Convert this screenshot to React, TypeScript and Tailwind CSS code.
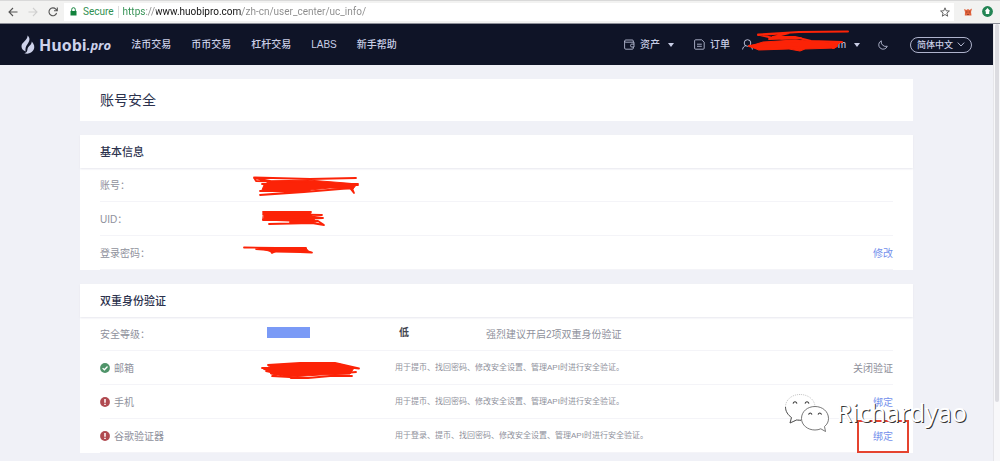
import type { ReactNode } from "react";

const MENU = ["法币交易", "币币交易", "杠杆交易", "LABS", "新手帮助"];

function Flame() {
  return (
    <svg viewBox="0 0 14 20" className="h-5 w-3.5" fill="currentColor" aria-hidden="true">
      <path d="M6.6 0.6C9.4 3.4 8.8 6 6.400 9.2C4.600 11.600 4.200 14 4.600 16.400C2 15.500 0.500 13.900 0.500 11.300C0.500 7.200 6.600 5.800 6.600 0.600Z" />
      <path d="M10.800 6.400C13.400 9.400 14 12.200 12.600 14.800C11.400 17 9 18.600 6.200 18.700C5 18.700 4.100 18.500 3.400 18.200C7.200 17.200 5.800 14.400 7.200 12.200C8.400 10.400 10.600 9.600 10.800 6.400Z" />
    </svg>
  );
}

function Caret() {
  return (
    <svg viewBox="0 0 6 4" className="h-1 w-1.5" fill="currentColor" aria-hidden="true">
      <path d="M0 0H6L3 4Z" />
    </svg>
  );
}

function WalletIcon() {
  return (
    <svg viewBox="0 0 11 11" className="size-[11px]" fill="none" stroke="currentColor" strokeWidth="0.8" aria-hidden="true">
      <path d="M9.3 3.2V2A1 1 0 0 0 8.3 1H1.8A1.2 1.2 0 0 0 .6 2.2V9A1.2 1.2 0 0 0 1.8 10.200H8.3A1 1 0 0 0 9.300 9.200V8M.6 2.2C.6 3 1.200 3.200 1.800 3.200H10V8H7.800A1.200 1.200 0 0 1 6.600 6.800V6.300A1.200 1.200 0 0 1 7.800 5.100H10" />
    </svg>
  );
}

function OrderIcon() {
  return (
    <svg viewBox="0 0 11 11" className="size-[11px]" fill="none" stroke="currentColor" strokeWidth="0.8" aria-hidden="true">
      <path d="M1.600 .8H7.600L10.200 3.200V9.200A1 1 0 0 1 9.200 10.200H1.600A1 1 0 0 1 .6 9.200V1.800A1 1 0 0 1 1.600 .8ZM3 5.200H7.800M3 7.300H7.800" />
    </svg>
  );
}

function UserIcon() {
  return (
    <svg viewBox="0 0 11 11" className="size-[11px]" fill="none" stroke="currentColor" strokeWidth="0.9" aria-hidden="true">
      <circle cx="5.500" cy="4" r="3.300" />
      <path d="M.6 10.500C.8 8.400 1.900 7.400 3.500 6.800M10.400 10.500C10.200 8.400 9.100 7.400 7.500 6.800" />
    </svg>
  );
}

function MoonIcon() {
  return (
    <svg viewBox="0 0 10 10" className="size-2.5" fill="none" stroke="currentColor" strokeWidth="0.8" aria-hidden="true">
      <path d="M3.300 .8A4.400 4.400 0 1 0 9.300 6.200A4.600 4.600 0 0 1 3.300 .8Z" />
    </svg>
  );
}

function StatusIcon({ ok }: { ok: boolean }) {
  return (
    <svg viewBox="0 0 10 10" className="size-2.5 shrink-0" aria-hidden="true">
      <circle cx="5" cy="5" r="4.900" fill={ok ? "#4f9469" : "#b04a50"} />
      {ok ? (
        <path d="M2.600 5.100L4.400 6.800L7.500 3.500" fill="none" stroke="#fff" strokeWidth="1.300" />
      ) : (
        <path d="M5 2V5.800M5 6.800V8" fill="none" stroke="#fff" strokeWidth="1.500" />
      )}
    </svg>
  );
}

function Scribble({ box, className, lines, fill }: { box: string; className: string; lines: string; fill: string }) {
  return (
    <svg viewBox={box} className={className} fill="none" stroke="#fc2307" strokeLinecap="round" strokeLinejoin="round" aria-hidden="true">
      <path d={fill} fill="#fc2307" strokeWidth="1" />
      <path d={lines} strokeWidth="1.800" />
    </svg>
  );
}

function AccountScribble() {
  return (
    <Scribble
      box="240 169 124 32"
      className="h-8 w-[124px]"
      fill="M270 181L308 180L346 183L357 184L353 189L330 188L300 191L262 190L264 185Z"
      lines="M356 178L310 179L254 177.500L256 181L310 182M254 178L270 181M262 184L358 184M260 191L310 191L260 195L304 192L352 188L354 193L350 188M352 185L358 185"
    />
  );
}

function UidScribble() {
  return (
    <Scribble
      box="240 203 124 32"
      className="h-8 w-[124px]"
      fill="M264 212L310 212L312 216L316 222L290 221L263 220Z"
      lines="M263 212L311 212M263 220L268 216L263 214L322 215L300 218L323 218L280 220L263 220M269 224L312 223L324 225L318 221L290 222"
    />
  );
}

function PasswordScribble() {
  return (
    <Scribble
      box="240 237 124 32"
      className="h-8 w-[124px]"
      fill="M256 247.500L306 248L309 252L272 252L262 249Z"
      lines="M244 247.500L276 248L306 248M256 249L270 250L272 253L276 251L312 252.500L304 250"
    />
  );
}

function MailScribble() {
  return (
    <Scribble
      box="240 352 124 32"
      className="h-8 w-[124px]"
      fill="M269 365L300 363.500L338 363.500L354 368L350 374L320 375L290 377L271 374Z"
      lines="M268 365L300 363L335 363L359 368.500L346 367M262 368L274 368M264 369L275 371L266 371L280 374L272 376L290 377L291 378L308 378L330 376L352 376M345 373L356 372"
    />
  );
}

function NameScribble() {
  return (
    <svg viewBox="748 28 104 26" className="absolute -top-2 left-[5px] h-[26px] w-[104px]" fill="none" stroke="#fc2307" strokeLinecap="round" strokeLinejoin="round" aria-hidden="true">
      <path d="M751 45L764 41L796 39L840 42L836 47L806 48L801 50L790 48L760 49Z" fill="#fc2307" />
      <path d="M849 30.500L800 31L759 33.500L774 37L800 40L780 41L750 45L762 48L800 46M759 34L790 32L774 36L796 36L812 40L843 41L830 43L838 45L834 47M770 38L802 37" strokeWidth="2" />
    </svg>
  );
}

function WechatIcon() {
  return (
    <svg viewBox="0 0 46 40" className="h-10 w-[46px]" aria-hidden="true">
      <path d="M16 1.500C7.500 1.500 1.500 7 1.500 14C1.500 18.500 4 22 7.500 24.500L6 30L12.500 27C22 28.500 31 23 31 14C31 7 24.500 1.500 16 1.500Z" fill="#fff" stroke="#aaa" strokeWidth="0.700" strokeDasharray="1 1" />
      <path d="M1.500 14C1.500 18.500 4 22 7.500 24.500L6 30L12.500 27L17 27.300" fill="none" stroke="#444" strokeWidth="0.900" />
      <path d="M31 13.500C23.500 13.500 17.500 18.500 17.500 25.500C17.500 32 23.500 37 31 37C33.200 37 35 36.600 36.800 35.800L41.500 38.500L40.500 33.500C43.200 31.500 44.500 28.700 44.500 25.500C44.500 18.500 38.500 13.500 31 13.500Z" fill="#fff" stroke="#555" strokeWidth="0.800" />
      <path d="M9 10.500Q11 7 13 10.500M21 10.500Q23 7 25 10.500M24.500 21.500Q26.200 18.500 28 21.500M34 21.500Q35.800 18.500 37.600 21.500" fill="none" stroke="#333" strokeWidth="1.200" />
    </svg>
  );
}

function BrowserBar() {
  return (
    <header className="flex h-6 items-center border-t border-b border-t-[#d9d9d9] border-b-[#8d8f98] bg-[#f2f2f1] pb-px text-[#5f6368]">
      <div className="flex w-16 shrink-0 items-center gap-2.5 pl-2">
        <button aria-label="Back">
          <svg viewBox="0 0 10 10" className="size-2.5" fill="none" stroke="#555" strokeWidth="1.100"><path d="M9.500 5H1M5 1L1 5L5 9" /></svg>
        </button>
        <button aria-label="Forward">
          <svg viewBox="0 0 10 10" className="size-2.5" fill="none" stroke="#d0d0d0" strokeWidth="1.100"><path d="M.5 5H9M5 1L9 5L5 9" /></svg>
        </button>
        <button aria-label="Reload">
          <svg viewBox="0 0 10 10" className="size-2.5" fill="none" stroke="#555" strokeWidth="1.100"><path d="M8.600 6A3.900 3.900 0 1 1 7.800 2.200L9 3.400M9.300 .5V3.800H6" /></svg>
        </button>
      </div>
      <div className="flex h-[18px] flex-1 items-center bg-white pr-1 pl-1.5">
        <svg viewBox="0 0 7 9" className="h-[9px] w-[7px]" aria-hidden="true">
          <path d="M.5 4H6.500V8.500H.5Z" fill="#12833c" />
          <path d="M1.700 4V2.500A1.800 1.800 0 0 1 5.300 2.500V4" fill="none" stroke="#12833c" />
        </svg>
        <span className="ml-1.5 border-r border-[#ddd] pr-1 font-[Roboto,sans-serif] text-[10px] leading-3 text-[#2f8f50]">Secure</span>
        <input
          aria-label="Address"
          defaultValue="https://www.huobipro.com/zh-cn/user_center/uc_info/"
          className="ml-1 h-3 min-w-0 flex-1 bg-[linear-gradient(90deg,#2f8f50_23px,#8a8a8a_23px,#8a8a8a_33px,#111_33px,#111_119px,#8a8a8a_119px)] bg-clip-text font-[Roboto,sans-serif] text-[10px] leading-3 text-transparent outline-none"
        />
        <button aria-label="Bookmark">
          <svg viewBox="0 0 10 10" className="size-2.5" fill="none" stroke="#555" strokeWidth="0.900"><path d="M5 .8L6.200 3.800L9.400 4L6.900 6L7.700 9.200L5 7.500L2.300 9.200L3.100 6L.6 4L3.800 3.800Z" /></svg>
        </button>
      </div>
      <div className="flex w-[46px] shrink-0 items-center justify-between pr-[7px] pl-2.5">
        <svg viewBox="0 0 8 8" className="size-2" aria-hidden="true">
          <path d="M0 1L2.500 2L4 1L5.500 2L8 .5L7 4L7.500 7.500H.8L1 4Z" fill="#e0623c" />
          <path d="M2 4H3.500M4.800 4H6.200M3 6.500H5" stroke="#8b3a25" strokeWidth="0.800" />
        </svg>
        <svg viewBox="0 0 11 11" className="size-[11px]" aria-hidden="true">
          <circle cx="5.500" cy="5.500" r="5.400" fill="#238454" />
          <path d="M5.500 2L8.300 5.300H7.200V8H3.800V5.300H2.700Z" fill="#fff" />
        </svg>
      </div>
    </header>
  );
}

function NavBar() {
  return (
    <nav className="flex h-[41px] items-center bg-[#0f1427] pr-[21px] pl-[21px] text-[10px] font-medium text-[#c9cee6]">
      <a href="#home" className="flex items-center text-[#cdd2ea]">
        <Flame />
        <span className="ml-1 font-['Open_Sans',sans-serif] text-[16px] leading-5 font-bold">Huobi</span>
        <span className="font-['Open_Sans',sans-serif] text-[13px] leading-5 font-bold italic">.pro</span>
      </a>
      <div className="ml-5 flex flex-1 items-center gap-5">
        {MENU.map((item) => (
          <a key={item} href="#menu" className="whitespace-nowrap">{item}</a>
        ))}
      </div>
      <div className="flex items-center">
        <button className="flex items-center">
          <WalletIcon />
          <span className="mr-2 ml-[5px]">资产</span>
          <Caret />
        </button>
        <a href="#orders" className="ml-5 flex items-center gap-[5px]">
          <OrderIcon />
          订单
        </a>
        <button aria-label="Account" className="relative ml-3 flex w-[118px] items-center justify-between">
          <UserIcon />
          <span className="flex items-center gap-2">m<Caret /></span>
          <NameScribble />
        </button>
        <button aria-label="Night mode" className="mr-[22px] ml-[18px]">
          <MoonIcon />
        </button>
        <button className="flex h-4 items-center gap-1 rounded-full border border-[#aeb3cc] px-1.5 text-[9px] leading-3">
          简体中文
          <svg viewBox="0 0 8 5" className="h-[5px] w-2" fill="none" stroke="currentColor" strokeWidth="0.900" aria-hidden="true"><path d="M.8 .6L4 4L7.200 .6" /></svg>
        </button>
      </div>
    </nav>
  );
}

function Card({ title, children }: { title: string; children: ReactNode }) {
  return (
    <section className="mt-3.5 bg-white">
      <h2 className="flex h-[33px] items-center px-5 pt-px text-[11px] font-medium text-[#2b314d] shadow-[0_1px_2px_#e6e7ee]">{title}</h2>
      <div className="px-5">{children}</div>
    </section>
  );
}

function Row({ label, icon, value, note, action }: { label: string; icon?: ReactNode; value?: ReactNode; note?: ReactNode; action?: ReactNode }) {
  return (
    <div className="flex h-[34px] items-center border-b border-[#f4f4f8] pt-px text-[10px] text-[#8f919c]">
      <div className="flex w-[140px] shrink-0 items-center gap-1">
        {icon}
        {label}
      </div>
      <div className="w-[155px] shrink-0">{value}</div>
      <div className="flex-1 text-[8px] whitespace-nowrap">{note}</div>
      {action}
    </div>
  );
}

export default function App() {
  return (
    <div className="flex min-h-screen flex-col bg-[#f0f1f7] font-['Liberation_Sans','Noto_Sans_CJK_SC',sans-serif]">
      <BrowserBar />
      <div className="flex flex-1">
        <div className="min-w-0 flex-1">
          <NavBar />
          <main className="relative px-20 pt-3.5 pb-2">
            <h1 className="flex h-[42px] items-center bg-white px-5 text-[14px] text-[#2b314d]">账号安全</h1>
            <Card title="基本信息">
              <Row label="账号：" value={<AccountScribble />} />
              <Row label="UID：" value={<UidScribble />} />
              <Row label="登录密码：" value={<PasswordScribble />} action={<a href="#password" className="text-[#7590ec]">修改</a>} />
            </Card>
            <Card title="双重身份验证">
              <Row
                label="安全等级："
                value={<div className="mb-1 ml-[27px] h-[11px] w-[43px] bg-[#7a9af6]" />}
                note={
                  <div className="flex items-center pl-1 text-[10px]">
                    <strong className="w-[87px] pb-1 font-bold text-[#44464f]">低</strong>
                    <span>强烈建议开启2项双重身份验证</span>
                  </div>
                }
              />
              <Row
                label="邮箱"
                icon={<StatusIcon ok />}
                value={<MailScribble />}
                note="用于提币、找回密码、修改安全设置、管理API时进行安全验证。"
                action={<a href="#email">关闭验证</a>}
              />
              <Row
                label="手机"
                icon={<StatusIcon ok={false} />}
                note="用于提币、找回密码、修改安全设置、管理API时进行安全验证。"
                action={<a href="#phone" className="text-[#7590ec]">绑定</a>}
              />
              <Row
                label="谷歌验证器"
                icon={<StatusIcon ok={false} />}
                note="用于登录、提币、找回密码、修改安全设置、管理API时进行安全验证。"
                action={
                  <a href="#google" className="relative text-[#7590ec]">
                    绑定
                    <span className="absolute -inset-x-4 -inset-y-[9px] border-2 border-[#e5432f]" />
                  </a>
                }
              />
            </Card>
            <div className="pointer-events-none absolute right-[26px] bottom-7 flex items-center gap-1.5">
              <WechatIcon />
              <span className="pb-0.5 font-['Noto_Sans',sans-serif] text-[25px] leading-8 text-white [text-shadow:1px_1px_0_#333]">Richardyao</span>
            </div>
          </main>
        </div>
        <div className="w-[7px] shrink-0 border-l border-[#e6e6ea] bg-[#f8f8fa]">
          <div className="mx-px h-[378px] rounded-full bg-[#dcdce1]" />
        </div>
      </div>
    </div>
  );
}
